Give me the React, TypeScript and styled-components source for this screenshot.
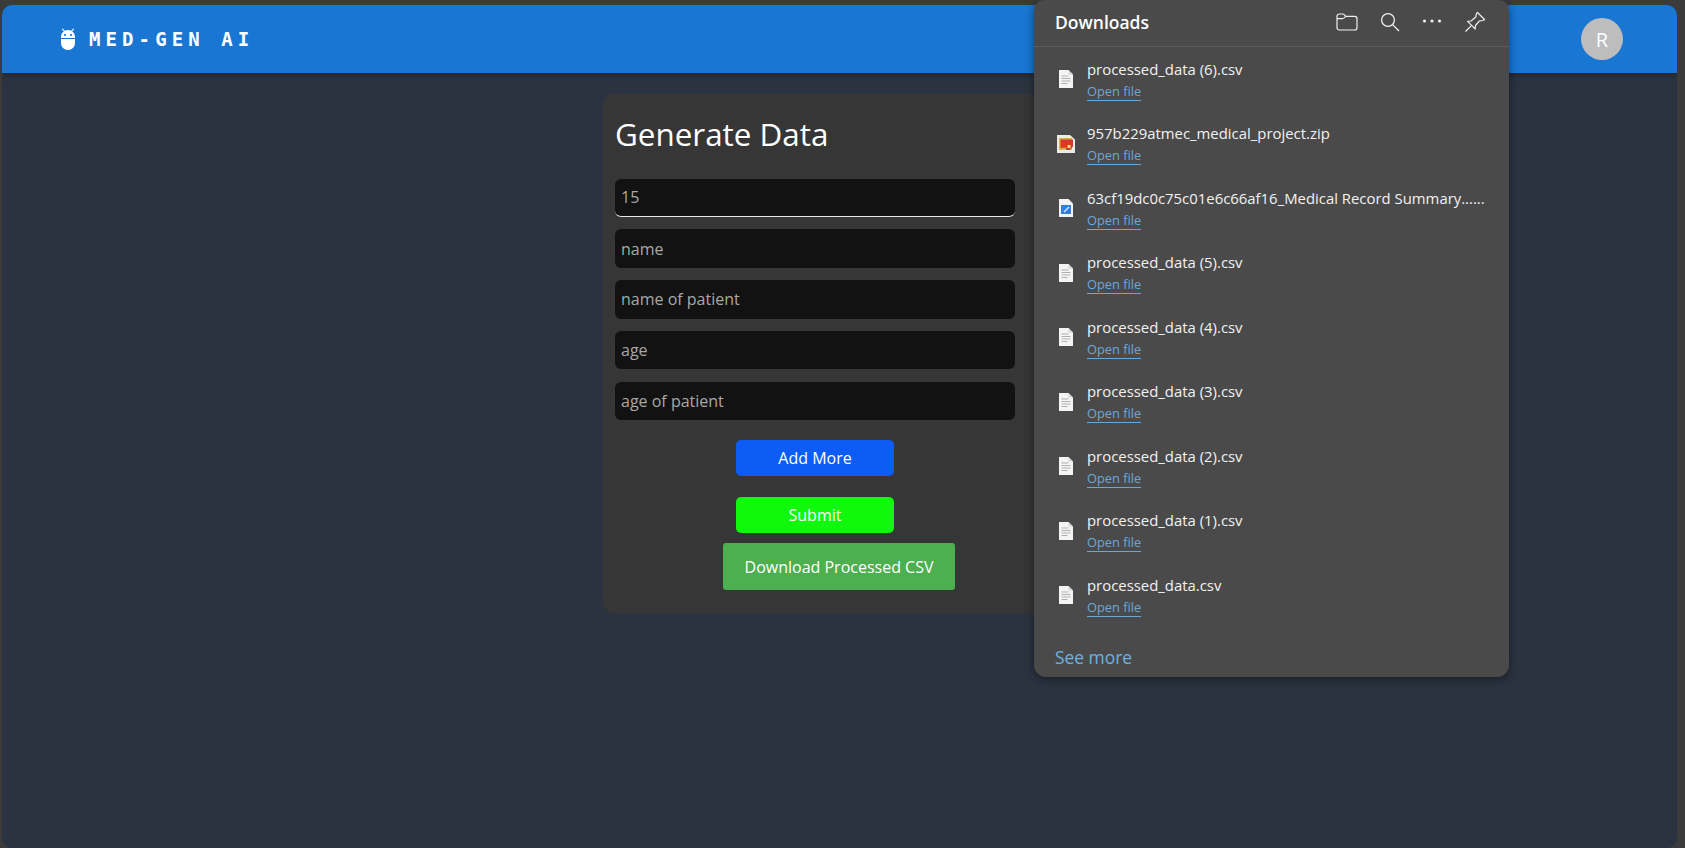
import React from 'react';
import styled, { createGlobalStyle } from 'styled-components';

const UI_FONT = `'Open Sans', 'Noto Sans', sans-serif`;

const GlobalStyle = createGlobalStyle`
  html, body {
    margin: 0;
    padding: 0;
    height: 100%;
    overflow: hidden;
    background: #3b3b3b;
  }
  * { box-sizing: border-box; }
`;

const Desktop = styled.div`
  position: relative;
  height: 848px;
  padding: 5px 8px 0 2px;
`;

const AppWindow = styled.div`
  height: 843px;
  border-radius: 10px;
  overflow: hidden;
  background: #2c3340;
  font-family: ${UI_FONT};
`;

const TopBar = styled.header`
  display: flex;
  align-items: center;
  justify-content: space-between;
  height: 68px;
  padding: 0 54px;
  background: #1976d2;
  box-shadow: 0 2px 6px rgba(0, 0, 0, 0.3);
`;

const Brand = styled.div`
  display: flex;
  align-items: center;
  gap: 9px;
  color: #fff;
`;

const BrandName = styled.span`
  font-family: 'DejaVu Sans Mono', 'Liberation Mono', monospace;
  font-weight: 700;
  font-size: 19px;
  letter-spacing: 5.1px;
`;

const Avatar = styled.div`
  display: flex;
  align-items: center;
  justify-content: center;
  width: 42px;
  height: 42px;
  border-radius: 50%;
  background: #bdbdbd;
  color: #fff;
  font-size: 20px;
`;

const Main = styled.main`
  display: flex;
  justify-content: center;
  padding: 21px 1px 0 0;
`;

const Card = styled.section`
  width: 472px;
  height: 519px;
  padding: 12px;
  border-radius: 10px;
  background: #363636;
`;

const Title = styled.h1`
  margin: 6px 0 22.5px;
  color: #fff;
  font-size: 31.4px;
  line-height: 44px;
  font-weight: 400;
`;

const Form = styled.form`
  display: flex;
  flex-direction: column;
  width: 400px;
`;

const Field = styled.input<{ $active?: boolean }>`
  width: 100%;
  height: 38.5px;
  margin-bottom: 12.3px;
  padding: 0 6px;
  border: none;
  border-bottom: ${(p) => (p.$active ? '1px solid #e8e8e8' : 'none')};
  border-radius: 6px;
  outline: none;
  background: #121212;
  color: #a8a8a8;
  font-family: ${UI_FONT};
  font-size: 16px;

  &::placeholder {
    color: #a8a8a8;
    opacity: 1;
  }
`;

const ActionButton = styled.button<{ $bg: string }>`
  align-self: center;
  width: 158px;
  height: 36px;
  margin-top: 8px;
  margin-bottom: 13px;
  border: none;
  border-radius: 5px;
  background: ${(p) => p.$bg};
  color: #fff;
  font-family: ${UI_FONT};
  font-size: 16px;
`;

const DownloadRow = styled.div`
  text-align: center;
  margin-top: -3px;
`;

const DownloadButton = styled.button`
  width: 232px;
  height: 47px;
  border: none;
  border-radius: 3px;
  background: #4caf50;
  color: #fff;
  font-family: ${UI_FONT};
  font-size: 16px;
`;

const DownloadsPanel = styled.aside`
  position: absolute;
  top: 0;
  left: 1034px;
  width: 475px;
  height: 677px;
  border-radius: 10px 10px 12px 12px;
  background: #4a4a4a;
  box-shadow: 0 2px 10px rgba(0, 0, 0, 0.45);
  color: #fff;
  font-family: ${UI_FONT};
`;

const PanelHeader = styled.div`
  display: flex;
  align-items: center;
  justify-content: space-between;
  height: 47px;
  padding: 0 23px 3px 21px;
  border-bottom: 1px solid #5a5e5c;
`;

const PanelTitle = styled.span`
  font-size: 17.5px;
  font-weight: 600;
`;

const PanelTools = styled.div`
  display: flex;
  align-items: center;
  gap: 22px;
  color: #f0f0f0;
`;

const FileList = styled.ul`
  display: flex;
  flex-direction: column;
  margin: 0;
  padding: 0;
  list-style: none;
`;

const FileRow = styled.li`
  display: flex;
  align-items: center;
  gap: 12px;
  height: 64.5px;
  padding: 0 21px 0 23px;
`;

const FileText = styled.div`
  display: flex;
  flex-direction: column;
  align-items: flex-start;
  min-width: 0;
`;

const FileName = styled.span`
  max-width: 400px;
  font-size: 14.9px;
  line-height: 22px;
  color: #f2f2f2;
  white-space: nowrap;
`;

const OpenLink = styled.a`
  margin-top: 3px;
  border-bottom: 1px solid #6aa9d6;
  color: #6aa9d6;
  font-size: 12.8px;
  line-height: 17px;
`;

const SeeMore = styled.a`
  display: block;
  padding: 17px 21px 0;
  color: #6fb1e0;
  font-size: 17.4px;
`;

const AdbIcon = () => (
  <svg width="24" height="24" viewBox="0 0 24 24" fill="#fff">
    <path d="M5 16c0 3.87 3.13 7 7 7s7-3.13 7-7v-4H5v4zM16.12 4.37l2.1-2.1-.82-.83-2.31 2.31C14.16 3.28 13.1 3 12 3s-2.16.28-3.09.75L6.6 1.44l-.82.83 2.1 2.1C6.14 5.64 5 7.68 5 10v1h14v-1c0-2.32-1.14-4.36-2.88-5.63zM9 9c-.55 0-1-.45-1-1s.45-1 1-1 1 .45 1 1-.45 1-1 1zm6 0c-.55 0-1-.45-1-1s.45-1 1-1 1 .45 1 1-.45 1-1 1z" />
  </svg>
);

const FolderIcon = () => (
  <svg width="22" height="20" viewBox="0 0 22 20" fill="none" stroke="currentColor" strokeWidth="1.2">
    <path d="M1 4.2C1 2.9 1.9 2 3.2 2h3.6c.6 0 1 .2 1.4.6L9.8 4.4h9c1.2 0 2.2.9 2.2 2.2v9.2c0 1.3-1 2.2-2.2 2.2H3.2C1.9 18 1 17.1 1 15.8z" />
    <path d="M1 6.6h5.4c.7 0 1.2-.3 1.7-.7l1.7-1.5" />
  </svg>
);

const SearchIcon = () => (
  <svg width="20" height="20" viewBox="0 0 20 20" fill="none" stroke="currentColor" strokeWidth="1.3">
    <circle cx="8" cy="8" r="6.4" />
    <path d="M12.6 12.6 19 19" />
  </svg>
);

const MoreIcon = () => (
  <svg width="20" height="20" viewBox="0 0 20 20" fill="currentColor">
    <circle cx="2.5" cy="9" r="1.6" />
    <circle cx="10" cy="9" r="1.6" />
    <circle cx="17.5" cy="9" r="1.6" />
  </svg>
);

const PinIcon = () => (
  <svg width="22" height="22" viewBox="0 0 22 22" fill="none" stroke="currentColor" strokeWidth="1.2" strokeLinejoin="round">
    <path d="M13.5 1.5 20.5 8.5 19 9.5 15.5 9.8 11.5 14.5 11.2 18 7.6 14.4 3.6 10.4 7 10 11.8 6 12.4 2.6z" />
    <path d="M7.4 14.6 1.5 20.5" />
  </svg>
);

const DocIcon = () => (
  <svg width="16" height="20" viewBox="0 0 16 20">
    <path d="M1 1h9.5L15 5.5V19H1z" fill="#f4f4f4" />
    <path d="M10.5 1v4.5H15z" fill="#d4d4d4" />
    <path d="M3.5 7h7M3.5 9.5h9M3.5 12h9M3.5 14.5h6" stroke="#b0b0b0" strokeWidth="1" />
  </svg>
);

const ZipIcon = () => (
  <svg width="18" height="20" viewBox="0 0 18 20">
    <path d="M0 1h13l5 4.5V19H0z" fill="#ececec" />
    <rect x="2" y="4" width="13" height="12" fill="#d9b44a" />
    <path d="M3.5 5.5H16v7l-3.5 3.5h-3l-1-2.5-5 .5z" fill="#d93a22" />
    <rect x="10.5" y="11" width="3" height="3" fill="#ecd9a0" />
  </svg>
);

const ImageDocIcon = () => (
  <svg width="16" height="20" viewBox="0 0 16 20">
    <path d="M1 1h9.5L15 5.5V19H1z" fill="#f4f4f4" />
    <rect x="3" y="7" width="10" height="9" fill="#2f7fd8" />
    <path d="M6 14l5-5" stroke="#cfe6ff" strokeWidth="1.6" />
  </svg>
);

type DownloadItem = { name: string; kind: 'doc' | 'zip' | 'image' };

const downloads: DownloadItem[] = [
  { name: 'processed_data (6).csv', kind: 'doc' },
  { name: '957b229atmec_medical_project.zip', kind: 'zip' },
  { name: '63cf19dc0c75c01e6c66af16_Medical Record Summary......', kind: 'image' },
  { name: 'processed_data (5).csv', kind: 'doc' },
  { name: 'processed_data (4).csv', kind: 'doc' },
  { name: 'processed_data (3).csv', kind: 'doc' },
  { name: 'processed_data (2).csv', kind: 'doc' },
  { name: 'processed_data (1).csv', kind: 'doc' },
  { name: 'processed_data.csv', kind: 'doc' }
];

const IconSlot = styled.div`
  display: flex;
  justify-content: center;
  flex: none;
  width: 18px;
`;

const iconFor = (kind: DownloadItem['kind']) => {
  if (kind === 'zip') return <ZipIcon />;
  if (kind === 'image') return <ImageDocIcon />;
  return <DocIcon />;
};

const App = () => {
  return (
    <Desktop>
      <GlobalStyle />
      <AppWindow>
        <TopBar>
          <Brand>
            <AdbIcon />
            <BrandName>MED-GEN AI</BrandName>
          </Brand>
          <Avatar>R</Avatar>
        </TopBar>
        <Main>
          <Card>
            <Title>Generate Data</Title>
            <Form>
              <Field $active defaultValue="15" />
              <Field placeholder="name" />
              <Field placeholder="name of patient" />
              <Field placeholder="age" />
              <Field placeholder="age of patient" />
              <ActionButton type="button" $bg="#0d5cf6">Add More</ActionButton>
              <ActionButton type="submit" $bg="#10f80c">Submit</ActionButton>
            </Form>
            <DownloadRow>
              <DownloadButton type="button">Download Processed CSV</DownloadButton>
            </DownloadRow>
          </Card>
        </Main>
      </AppWindow>
      <DownloadsPanel>
        <PanelHeader>
          <PanelTitle>Downloads</PanelTitle>
          <PanelTools>
            <FolderIcon />
            <SearchIcon />
            <MoreIcon />
            <PinIcon />
          </PanelTools>
        </PanelHeader>
        <FileList>
          {downloads.map((item) => (
            <FileRow key={item.name}>
              <IconSlot>{iconFor(item.kind)}</IconSlot>
              <FileText>
                <FileName>{item.name}</FileName>
                <OpenLink>Open file</OpenLink>
              </FileText>
            </FileRow>
          ))}
        </FileList>
        <SeeMore>See more</SeeMore>
      </DownloadsPanel>
    </Desktop>
  );
};

export default App;
